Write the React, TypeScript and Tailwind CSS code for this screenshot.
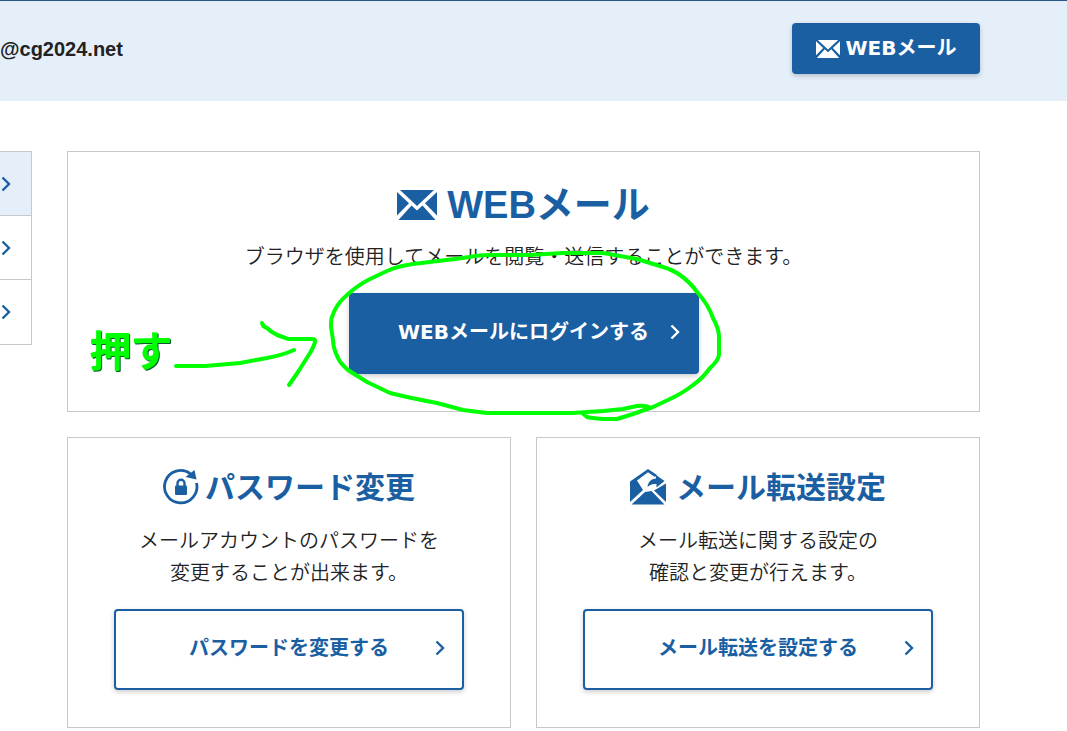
import type { ReactNode } from "react";

type IconProps = { className?: string };

function MailIcon({ className }: IconProps) {
  return (
    <svg viewBox="0 0 40 30" className={className} fill="currentColor" aria-hidden="true">
      <path d="M3 0H37L20 16Z" />
      <path d="M0 2L12 13.200L0 25.500Z" />
      <path d="M40 2L28 13.200L40 25.500Z" />
      <path d="M1.500 30L14.500 15.500L20 20.500L25.500 15.500L38.500 30Z" />
    </svg>
  );
}

function PasswordIcon({ className }: IconProps) {
  return (
    <svg viewBox="0 0 36 36" className={className} fill="none" aria-hidden="true">
      <path
        d="M33.500 14A16.200 16.200 0 1 1 27.500 4.800"
        stroke="currentColor"
        strokeWidth="2.800"
      />
      <path d="M31.500 1L33.500 10.500L22.500 8Z" fill="currentColor" />
      <path d="M14.500 17V14.200A3.500 3.500 0 0 1 21.500 14.200V17" stroke="currentColor" strokeWidth="2.400" />
      <rect x="12" y="16.500" width="12" height="9.500" rx="1" fill="currentColor" />
    </svg>
  );
}

function ForwardIcon({ className }: IconProps) {
  return (
    <svg viewBox="0 0 36 36" className={className} fill="currentColor" aria-hidden="true">
      <path d="M0 12.500L18 0L27 6L25 8L18 3.200L7 11.500L13 21L0 33Z" />
      <path d="M26 6L34.500 12L26.500 18.500V15C23 15 20 15.500 17.500 18C18 13 21 10 26 9.500Z" />
      <path d="M36 14.500V33L24 21.500Z" />
      <path d="M1.500 35.500L15 23L21.500 22L34.500 35.500Z" />
    </svg>
  );
}

function Chevron({ className }: IconProps) {
  return (
    <svg viewBox="0 0 10 16" className={className} fill="none" aria-hidden="true">
      <path d="M1.500 1.500L8 8L1.500 14.500" stroke="currentColor" strokeWidth="2.400" />
    </svg>
  );
}

function ActionLink({ children, primary = false }: { children: ReactNode; primary?: boolean }) {
  return (
    <a
      href="#"
      className={`grid h-[81px] w-full max-w-[350px] grid-cols-[1fr_auto_1fr] items-center rounded-sm border-2 border-[#1b5fa3] px-[17px] pb-1 font-['DejaVu_Sans','Noto_Sans_CJK_JP',sans-serif] text-xl font-bold shadow-[0_2px_5px_rgba(0,0,0,0.2)] ${
        primary ? "bg-[#1b5fa3] text-white" : "bg-white text-[#1b5fa3]"
      }`}
    >
      <span className="col-start-2">{children}</span>
      <Chevron className="h-4 w-[10px] justify-self-end" />
    </a>
  );
}

function Annotation() {
  return (
    <div className="pointer-events-none absolute -inset-px">
      <svg
        viewBox="67 151 913 261"
        className="size-full overflow-visible"
        fill="none"
        stroke="#00ff00"
        strokeWidth="4"
        strokeLinecap="round"
        strokeLinejoin="round"
      >
        <path d="M650 408Q647 405 637 406L623 409L603 411L572 413H487L463 410L437 403Q410 398 390 393L367 382L348 370Q340 363 338 358Q333 348 333 340L331 327Q331 319 332 317Q336 304 347 295Q358 285 370 279L387 271Q398 266 413 264L463 258Q478 255 490 255H530L563 253H603L637 259L663 267Q673 270 680 275Q690 282 697 292Q708 304 713 318Q719 329 719 337V355Q718 361 710 368Q703 378 693 385Q683 393 670 399L653 407L633 414L617 419H603Q590 418 587 417L582 413" />
        <path d="M176 366H205L240 363L267 358Q283 355 294 350" />
        <path d="M262 323Q263 327 267 328Q271 332 277 335Q283 337 288 339H312Q316 339 315 342Q314 346 310 353L298 372L289 385" />
        <text
          x="90"
          y="366"
          fontSize="41"
          strokeWidth="2"
          fill="#00ff00"
          className="font-['Noto_Sans_CJK_JP',sans-serif] font-normal [filter:drop-shadow(1px_1px_0_#075c35)]"
        >
          押す
        </text>
      </svg>
    </div>
  );
}

const menuItems = ["WEBメール", "パスワード変更", "メール転送設定"];

const settings = [
  {
    title: "パスワード変更",
    icon: <PasswordIcon className="size-9" />,
    gap: "gap-1.5",
    lines: ["メールアカウントのパスワードを", "変更することが出来ます。"],
    action: "パスワードを変更する",
  },
  {
    title: "メール転送設定",
    icon: <ForwardIcon className="size-9" />,
    gap: "gap-2.5",
    lines: ["メール転送に関する設定の", "確認と変更が行えます。"],
    action: "メール転送を設定する",
  },
];

export default function App() {
  return (
    <div className="min-h-screen bg-white font-['Noto_Sans','Noto_Sans_CJK_JP',sans-serif] text-[#222]">
      <header className="flex h-[101px] items-start justify-between border-t border-[#2a5687] bg-[#e5effa] pr-[87px]">
        <p className="pt-8 font-['Liberation_Sans',sans-serif] text-xl leading-8 font-bold">
          @cg2024.net
        </p>
        <a
          href="#"
          className="mt-[22px] flex h-[51px] w-[188px] items-center justify-center gap-1.5 rounded-sm bg-[#1b5fa3] font-['DejaVu_Sans','Noto_Sans_CJK_JP',sans-serif] text-xl font-bold text-white shadow-[0_2px_5px_rgba(0,0,0,0.2)]"
        >
          <MailIcon className="h-[18px] w-6" />
          <span className="pb-0.5">WEBメール</span>
        </a>
      </header>

      <div className="flex items-start gap-[35px] pt-[50px] pr-[87px]">
        <nav className="w-8 shrink-0 divide-y divide-[#c5c9cc] border-y border-r border-[#c5c9cc]">
          {menuItems.map((item, i) => (
            <a
              key={item}
              href="#"
              aria-label={item}
              className={`flex h-16 items-center pl-px text-[#1b5fa3] ${
                i === 0 ? "bg-[#e5effa]" : "bg-white"
              }`}
            >
              <Chevron className="h-4 w-[10px]" />
            </a>
          ))}
        </nav>

        <main className="grid min-w-0 flex-1 grid-cols-2 gap-[25px]">
          <section className="relative col-span-2 flex h-[261px] flex-col items-center border border-[#c8c8c8] pt-[25px]">
            <h1 className="flex items-center gap-2.5 font-['Liberation_Sans','Noto_Sans_CJK_JP',sans-serif] text-[38px] leading-[56px] font-bold text-[#1b5fa3]">
              <MailIcon className="h-[30px] w-10" />
              WEBメール
            </h1>
            <p className="mt-2 text-xl leading-8 font-[350]">
              ブラウザを使用してメールを閲覧・送信することができます。
            </p>
            <div className="mt-5 flex w-full justify-center">
              <ActionLink primary>WEBメールにログインする</ActionLink>
            </div>
            <Annotation />
          </section>

          {settings.map((s) => (
            <section
              key={s.title}
              className="flex h-[291px] flex-col items-center border border-[#c8c8c8] px-6 pt-[27px]"
            >
              <h2
                className={`flex items-center text-3xl leading-[44px] font-bold text-[#1b5fa3] ${s.gap}`}
              >
                {s.icon}
                {s.title}
              </h2>
              <p className="mt-4 mb-5 text-center text-xl leading-8 font-[350]">
                {s.lines[0]}
                <br />
                {s.lines[1]}
              </p>
              <ActionLink>{s.action}</ActionLink>
            </section>
          ))}
        </main>
      </div>
    </div>
  );
}
